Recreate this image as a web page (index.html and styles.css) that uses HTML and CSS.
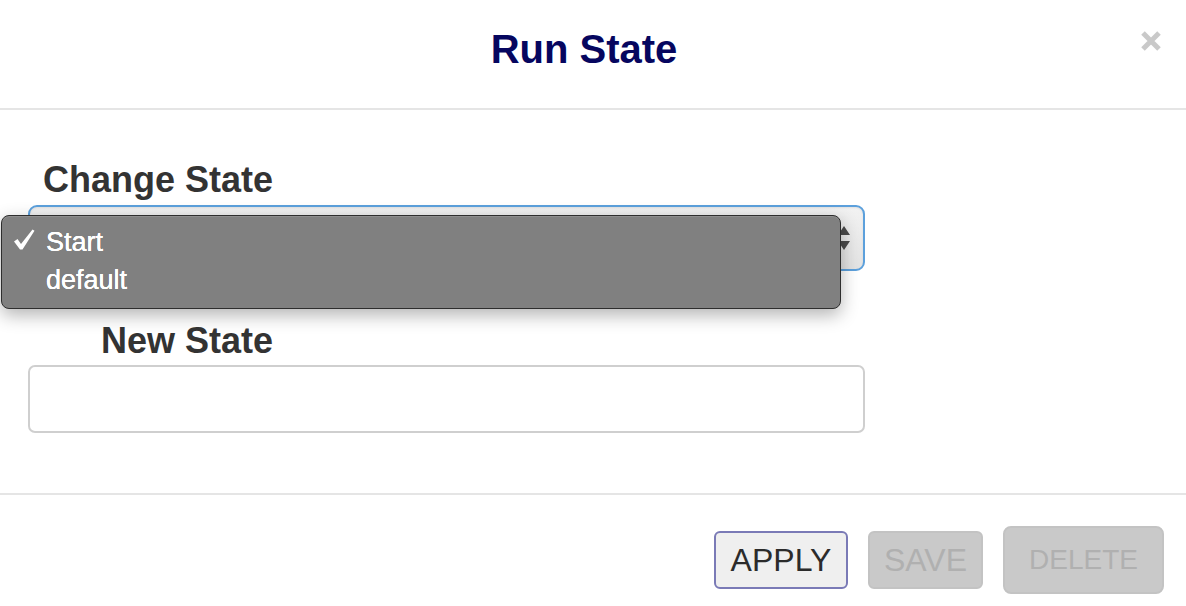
FILE: index.html
```html
<!DOCTYPE html>
<html>
<head>
<meta charset="utf-8">
<link rel="stylesheet" href="styles.css">
</head>
<body>
<div class="modal">
  <header class="modal-header">
    <h1 class="title">Run State</h1>
    <button class="close" aria-label="Close">
      <svg width="22" height="22" viewBox="0 0 22 22"><path d="M3 3 L19 19 M19 3 L3 19" stroke="#c9c9c9" stroke-width="5" stroke-linecap="butt"/></svg>
    </button>
  </header>
  <section class="modal-body">
    <div class="field">
      <label class="label">Change State</label>
      <div class="select-wrap">
        <div class="select">
          <span class="arrows">
            <svg width="14" height="28" viewBox="0 0 14 28"><path d="M7 2 L13 11 L1 11 Z M7 26 L13 17 L1 17 Z" fill="#4a4a4a"/></svg>
          </span>
        </div>
        <ul class="menu">
          <li class="item checked"><span class="check"><svg width="22" height="21" viewBox="0 0 22 21"><path d="M1 12.5 L4.5 10 L8 15 L19.5 0.5 L21.5 1.8 L9.5 20.5 L7 20.5 Z" fill="#fff"/></svg></span>Start</li>
          <li class="item"><span class="check"></span>default</li>
        </ul>
      </div>
    </div>
    <div class="field second">
      <label class="label">New State</label>
      <input class="text-input" type="text">
    </div>
  </section>
  <footer class="modal-footer">
    <button class="btn apply">APPLY</button>
    <button class="btn disabled save">SAVE</button>
    <button class="btn disabled delete">DELETE</button>
  </footer>
</div>
</body>
</html>
```
FILE: styles.css
```css
* { box-sizing: border-box; }
html, body { margin: 0; padding: 0; background: #fff; }
body { font-family: "Liberation Sans", Arial, sans-serif; color: #333; width: 1186px; height: 606px; overflow: hidden; }

.modal { width: 1186px; }

.modal-header {
  height: 110px;
  border-bottom: 2px solid #e5e5e5;
  display: flex;
  align-items: center;
  justify-content: center;
  position: relative;
}
.title {
  margin: 0 18px 10px 0;
  font-size: 40px;
  font-weight: bold;
  color: #06065f;
  line-height: 46px;
}
.close {
  position: absolute;
  right: 24px;
  top: 30px;
  border: 0;
  background: none;
  padding: 0;
  width: 22px;
  height: 22px;
  display: block;
}
.close svg { display: block; }

.modal-body {
  padding: 50px 321px 60px 28px;
  border-bottom: 2px solid #e5e5e5;
}
.field { display: flex; flex-direction: column; }
.field.second { margin-top: 50px; }
.label {
  width: 245px;
  text-align: right;
  font-size: 36px;
  font-weight: bold;
  line-height: 40px;
  color: #333;
  margin-bottom: 5px;
}
.field.second .label { margin-bottom: 4px; }

.select-wrap { position: relative; }
.select {
  height: 66px;
  border: 2px solid #5ca0dc;
  border-radius: 9px;
  background: linear-gradient(#f2f2f2, #e3e3e3);
  box-shadow: inset 0 1px 2px rgba(0,0,0,0.08);
  display: flex;
  align-items: center;
  justify-content: flex-end;
  padding-right: 12px;
}
.arrows svg { display: block; }

.menu {
  position: absolute;
  left: -27px;
  top: 10px;
  width: 840px;
  height: 94px;
  margin: 0;
  padding: 7px 0 0 0;
  list-style: none;
  background: #808080;
  border: 1px solid #2e2e2e;
  border-radius: 8px;
  box-shadow: 0 6px 18px rgba(0,0,0,0.3), inset 0 1px 0 rgba(255,255,255,0.12);
}
.item {
  display: flex;
  align-items: center;
  height: 38px;
  font-size: 27px;
  color: #fff;
  text-shadow: 0 0 0.5px #fff, 0 0 0.5px #fff;
  padding-left: 11px;
}
.check {
  width: 33px;
  display: flex;
  align-items: center;
  margin-top: -5px;
}
.check svg { display: block; }

.text-input {
  height: 68px;
  border: 2px solid #cfcfcf;
  border-radius: 7px;
  background: #fff;
  width: 100%;
}

.modal-footer {
  display: flex;
  justify-content: flex-end;
  align-items: center;
  gap: 20px;
  padding: 30px 22px 0 0;
  height: 100px;
}
.btn {
  font-family: "Liberation Sans", Arial, sans-serif;
  font-size: 32px;
  height: 58px;
  border-radius: 6px;
  padding: 0 12px;
  line-height: 1;
}
.apply {
  width: 134px;
  border: 2px solid #7a7ab6;
  background: #efefef;
  color: #2b2b2b;
}
.disabled {
  border: 2px solid #c3c3c3;
  background: #c9c9c9;
  color: #b0b0b0;
}
.save { width: 115px; }
.delete { width: 161px; height: 68px; font-size: 28px; border-radius: 8px; }
```
